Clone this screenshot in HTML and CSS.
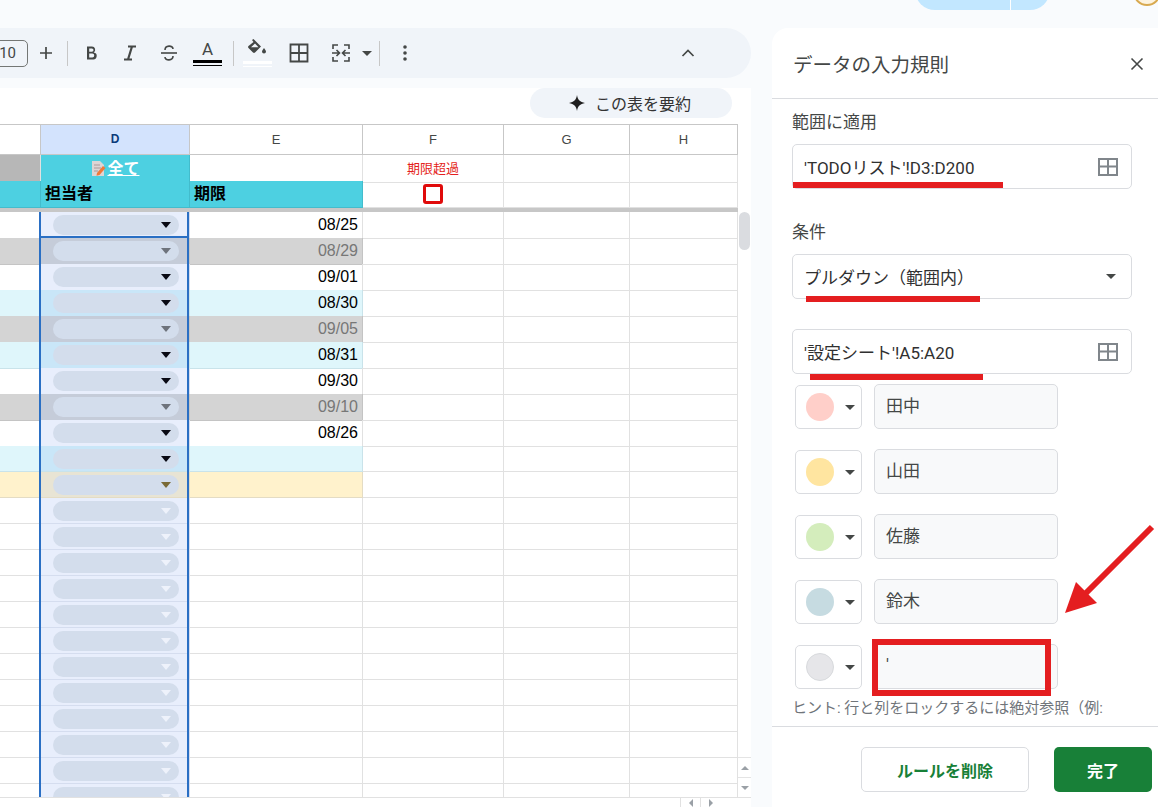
FILE: index.html
```html
<!DOCTYPE html>
<html lang="ja">
<head>
    <meta charset="UTF-8">
    <meta name="viewport" content="width=device-width, initial-scale=1.0">
    <title>データの入力規則</title>
    <link rel="stylesheet" href="styles.css">
</head>
<body>
    <div class="topbar">
        <div class="share-pill"><span class="share-main"></span><span class="share-caret"></span></div>
        <div class="avatar"></div>
    </div>

    <div class="workspace">
        <main class="main">
            <div class="toolbar">
                <div class="font-size">10</div>
                <button class="tb-btn tb-plus"><svg width="16" height="16" viewBox="0 0 16 16"><path d="M8 2v12M2 8h12" stroke="#444746" stroke-width="1.7"/></svg></button>
                <span class="tb-sep"></span>
                <button class="tb-btn tb-bold"><svg width="20" height="20" viewBox="0 0 20 20"><path d="M6 3.5h5a3.2 3.2 0 0 1 1.7 5.9A3.5 3.5 0 0 1 11.500 16.500H6zM8.200 5.500v3.200h2.700a1.600 1.600 0 0 0 0-3.200zM8.200 10.600v3.900h3.100a1.950 1.950 0 0 0 0-3.900z" fill="#444746" fill-rule="evenodd"/></svg></button>
                <button class="tb-btn"><svg width="20" height="20" viewBox="0 0 20 20"><path d="M8 3.500h8M4 16.500h8M12 3.500L8 16.500" stroke="#444746" stroke-width="2.200" fill="none"/></svg></button>
                <button class="tb-btn"><svg width="22" height="22" viewBox="0 0 22 22"><path d="M3 11h16" stroke="#444746" stroke-width="1.600"/><path d="M7 8c0-5 8-5 8-1M15 14c0 5-8 5-8 1" stroke="#444746" stroke-width="1.600" fill="none"/></svg></button>
                <button class="tb-btn tb-color"><span class="tb-letter">A</span><span class="tb-bar tb-bar-black"></span></button>
                <span class="tb-sep tb-sep-two"></span>
                <button class="tb-btn tb-fill"><svg width="24" height="22" viewBox="0 0 24 22"><path d="M7 1l1.500-1L16 7.500 10 13.500a1.500 1.500 0 0 1-2 0L3.500 9a1.500 1.500 0 0 1 0-2L8.500 3z M6 8.200h7.500L10 4.600z" fill="#444746" fill-rule="evenodd"/><path d="M19 9c1.300 1.800 2 2.700 2 3.600a2 2 0 0 1-4 0c0-.9.700-1.800 2-3.600z" fill="#444746"/></svg><span class="tb-bar tb-bar-white"></span></button>
                <button class="tb-btn tb-borders"><svg width="20" height="20" viewBox="0 0 20 20"><path d="M1.500 1.500h17v17h-17zM10 1.500v17M1.500 10h17" stroke="#444746" stroke-width="1.800" fill="none"/></svg></button>
                <button class="tb-btn tb-merge"><svg width="22" height="22" viewBox="0 0 22 22"><path d="M8 3H3v4M3 15v4h5M14 3h5v4M19 15v4h-5" stroke="#444746" stroke-width="1.600" fill="none"/><path d="M2 11h7M6.500 8l3 3-3 3M20 11h-7M15.500 8l-3 3 3 3" stroke="#444746" stroke-width="1.600" fill="none"/></svg></button>
                <span class="caret tb-caret"></span>
                <span class="tb-sep tb-sep-three"></span>
                <button class="tb-btn tb-dots"><svg width="6" height="18" viewBox="0 0 6 18"><circle cx="3" cy="3" r="1.800" fill="#444746"/><circle cx="3" cy="9" r="1.800" fill="#444746"/><circle cx="3" cy="15" r="1.800" fill="#444746"/></svg></button>
                <button class="tb-btn tb-chevron"><svg width="16" height="16" viewBox="0 0 16 16"><path d="M2.500 11L8 5.500l5.500 5.500" stroke="#444746" stroke-width="1.700" fill="none"/></svg></button>
            </div>

            <div class="sheet-area">
                <div class="summary-bar">
                    <div class="summary-pill">
                        <svg width="16" height="16" viewBox="0 0 16 16"><path d="M8 0c.8 4.800 3 7.100 8 8-5 .9-7.200 3.200-8 8-.8-4.800-3-7.100-8-8 5-.9 7.200-3.200 8-8z" fill="#1f1f1f"/></svg>
                        <span>この表を要約</span>
                    </div>
                </div>

                <div class="sheet-wrap">
                    <div class="grid">
                        <div class="row row-head">
                            <div class="cell"></div><div class="cell col-active">D</div><div class="cell">E</div><div class="cell">F</div><div class="cell">G</div><div class="cell">H</div>
                        </div>
                        <div class="row row-filter">
                            <div class="cell c-gray"></div>
                            <div class="cell c-cyan filter-link"><svg width="17" height="17" viewBox="0 0 17 17"><path d="M2 1h8l4 4v11H2z" fill="#ddd5d5"/><path d="M4 5h6M4 8h7M4 11h4" stroke="#a99" stroke-width="1"/><path d="M7 13l6-7 2.500 2-6 7-3 .8z" fill="#f0793a"/></svg><span>全て</span></div>
                            <div class="cell"></div>
                            <div class="cell overdue">期限超過</div>
                            <div class="cell"></div><div class="cell"></div>
                        </div>
                        <div class="row row-title">
                            <div class="cell c-cyan"></div>
                            <div class="cell c-cyan title">担当者</div>
                            <div class="cell c-cyan title">期限</div>
                            <div class="cell check-cell"><span class="checkbox"></span></div>
                            <div class="cell"></div><div class="cell"></div>
                        </div>
                        <div class="freeze"></div>

                        <div class="row"><div class="cell"></div><div class="cell d"><span class="chip"><i class="arrow"></i></span></div><div class="cell date">08/25</div><div class="cell"></div><div class="cell"></div><div class="cell"></div></div>
                        <div class="row done"><div class="cell"></div><div class="cell d"><span class="chip"><i class="arrow"></i></span></div><div class="cell date">08/29</div><div class="cell plain"></div><div class="cell plain"></div><div class="cell plain"></div></div>
                        <div class="row"><div class="cell"></div><div class="cell d"><span class="chip"><i class="arrow"></i></span></div><div class="cell date">09/01</div><div class="cell"></div><div class="cell"></div><div class="cell"></div></div>
                        <div class="row near"><div class="cell"></div><div class="cell d"><span class="chip"><i class="arrow"></i></span></div><div class="cell date">08/30</div><div class="cell plain"></div><div class="cell plain"></div><div class="cell plain"></div></div>
                        <div class="row done"><div class="cell"></div><div class="cell d"><span class="chip"><i class="arrow"></i></span></div><div class="cell date">09/05</div><div class="cell plain"></div><div class="cell plain"></div><div class="cell plain"></div></div>
                        <div class="row near"><div class="cell"></div><div class="cell d"><span class="chip"><i class="arrow"></i></span></div><div class="cell date">08/31</div><div class="cell plain"></div><div class="cell plain"></div><div class="cell plain"></div></div>
                        <div class="row"><div class="cell"></div><div class="cell d"><span class="chip"><i class="arrow"></i></span></div><div class="cell date">09/30</div><div class="cell"></div><div class="cell"></div><div class="cell"></div></div>
                        <div class="row done"><div class="cell"></div><div class="cell d"><span class="chip"><i class="arrow"></i></span></div><div class="cell date">09/10</div><div class="cell plain"></div><div class="cell plain"></div><div class="cell plain"></div></div>
                        <div class="row"><div class="cell"></div><div class="cell d"><span class="chip"><i class="arrow"></i></span></div><div class="cell date">08/26</div><div class="cell"></div><div class="cell"></div><div class="cell"></div></div>
                        <div class="row near"><div class="cell"></div><div class="cell d"><span class="chip"><i class="arrow"></i></span></div><div class="cell"></div><div class="cell plain"></div><div class="cell plain"></div><div class="cell plain"></div></div>
                        <div class="row warn"><div class="cell"></div><div class="cell d"><span class="chip"><i class="arrow"></i></span></div><div class="cell"></div><div class="cell plain"></div><div class="cell plain"></div><div class="cell plain"></div></div>
                        <div class="row empty"><div class="cell"></div><div class="cell d"><span class="chip"><i class="arrow"></i></span></div><div class="cell"></div><div class="cell"></div><div class="cell"></div><div class="cell"></div></div>
                        <div class="row empty"><div class="cell"></div><div class="cell d"><span class="chip"><i class="arrow"></i></span></div><div class="cell"></div><div class="cell"></div><div class="cell"></div><div class="cell"></div></div>
                        <div class="row empty"><div class="cell"></div><div class="cell d"><span class="chip"><i class="arrow"></i></span></div><div class="cell"></div><div class="cell"></div><div class="cell"></div><div class="cell"></div></div>
                        <div class="row empty"><div class="cell"></div><div class="cell d"><span class="chip"><i class="arrow"></i></span></div><div class="cell"></div><div class="cell"></div><div class="cell"></div><div class="cell"></div></div>
                        <div class="row empty"><div class="cell"></div><div class="cell d"><span class="chip"><i class="arrow"></i></span></div><div class="cell"></div><div class="cell"></div><div class="cell"></div><div class="cell"></div></div>
                        <div class="row empty"><div class="cell"></div><div class="cell d"><span class="chip"><i class="arrow"></i></span></div><div class="cell"></div><div class="cell"></div><div class="cell"></div><div class="cell"></div></div>
                        <div class="row empty"><div class="cell"></div><div class="cell d"><span class="chip"><i class="arrow"></i></span></div><div class="cell"></div><div class="cell"></div><div class="cell"></div><div class="cell"></div></div>
                        <div class="row empty"><div class="cell"></div><div class="cell d"><span class="chip"><i class="arrow"></i></span></div><div class="cell"></div><div class="cell"></div><div class="cell"></div><div class="cell"></div></div>
                        <div class="row empty"><div class="cell"></div><div class="cell d"><span class="chip"><i class="arrow"></i></span></div><div class="cell"></div><div class="cell"></div><div class="cell"></div><div class="cell"></div></div>
                        <div class="row empty"><div class="cell"></div><div class="cell d"><span class="chip"><i class="arrow"></i></span></div><div class="cell"></div><div class="cell"></div><div class="cell"></div><div class="cell"></div></div>
                        <div class="row empty"><div class="cell"></div><div class="cell d"><span class="chip"><i class="arrow"></i></span></div><div class="cell"></div><div class="cell"></div><div class="cell"></div><div class="cell"></div></div>
                        <div class="row empty row-cut"><div class="cell"></div><div class="cell d"><span class="chip"><i class="arrow"></i></span></div><div class="cell"></div><div class="cell"></div><div class="cell"></div><div class="cell"></div></div>

                        <div class="selection"></div>
                        <div class="selection-first"></div>
                    </div>

                    <div class="vscroll">
                        <div class="vscroll-top"></div>
                        <div class="vthumb"></div>
                        <div class="vbtns">
                            <div class="vbtn"><i class="tri-up"></i></div>
                            <div class="vbtn"><i class="tri-down"></i></div>
                        </div>
                    </div>
                </div>
                <div class="hscroll">
                    <div class="hbtn"><i class="tri-left"></i></div>
                    <div class="hbtn"><i class="tri-right"></i></div>
                </div>
            </div>
        </main>

        <aside class="panel">
            <div class="panel-head">
                <h2>データの入力規則</h2>
                <svg width="14" height="14" viewBox="0 0 14 14"><path d="M1.500 1.500l11 11M12.500 1.500l-11 11" stroke="#444746" stroke-width="1.600"/></svg>
            </div>
            <div class="panel-body">
                <div class="label">範囲に適用</div>
                <div class="field">
                    <span>'TODOリスト'!D3:D200</span>
                    <svg class="grid-icon" width="20" height="18" viewBox="0 0 20 18"><path d="M1 1h18v16H1zM10 1v16M1 8.500h18" stroke="#80868b" stroke-width="2" fill="none"/></svg>
                </div>
                <div class="label label-cond">条件</div>
                <div class="field">
                    <span>プルダウン（範囲内）</span>
                    <span class="caret caret-select"></span>
                </div>
                <div class="field field-range">
                    <span>'設定シート'!A5:A20</span>
                    <svg class="grid-icon" width="20" height="18" viewBox="0 0 20 18"><path d="M1 1h18v16H1zM10 1v16M1 8.500h18" stroke="#80868b" stroke-width="2" fill="none"/></svg>
                </div>

                <div class="option">
                    <div class="swatch-box"><span class="swatch sw-red"></span><span class="caret"></span></div>
                    <div class="option-input">田中</div>
                </div>
                <div class="option">
                    <div class="swatch-box"><span class="swatch sw-yellow"></span><span class="caret"></span></div>
                    <div class="option-input">山田</div>
                </div>
                <div class="option">
                    <div class="swatch-box"><span class="swatch sw-green"></span><span class="caret"></span></div>
                    <div class="option-input">佐藤</div>
                </div>
                <div class="option">
                    <div class="swatch-box"><span class="swatch sw-blue"></span><span class="caret"></span></div>
                    <div class="option-input">鈴木</div>
                </div>
                <div class="option">
                    <div class="swatch-box"><span class="swatch sw-gray"></span><span class="caret"></span></div>
                    <div class="option-input option-quote">'</div>
                </div>
                <div class="hint">ヒント: 行と列をロックするには絶対参照（例:</div>
            </div>
            <div class="panel-foot">
                <button class="btn-delete">ルールを削除</button>
                <button class="btn-done">完了</button>
            </div>
        </aside>
    </div>

    <!-- 赤い注釈 -->
    <svg class="annotations" width="1158" height="807" viewBox="0 0 1158 807">
        <rect x="793" y="182" width="210" height="6" fill="#e41e20"/>
        <rect x="806" y="296" width="174" height="6" fill="#e41e20"/>
        <rect x="810" y="374" width="173" height="6" fill="#e41e20"/>
        <rect x="875" y="642" width="173" height="51" fill="none" stroke="#e41e20" stroke-width="6"/>
        <path d="M1152 527L1085 594" stroke="#e41e20" stroke-width="6"/>
        <polygon points="1065,613 1097,603 1076,582" fill="#e41e20"/>
    </svg>
</body>
</html>
```

FILE: styles.css
```css
* {
    box-sizing: border-box;
}
html, body {
    margin: 0;
    height: 100%;
}
body {
    width: 1158px;
    height: 807px;
    overflow: hidden;
    position: relative;
    background: #f9fbfd;
    font-family: "Liberation Sans", "Noto Sans CJK JP", sans-serif;
    color: #1f1f1f;
}
button {
    font-family: inherit;
    background: none;
    border: none;
    padding: 0;
}

/* top bar */
.topbar {
    height: 28px;
    position: relative;
}
.share-pill {
    position: absolute;
    left: 915px;
    top: -20px;
    width: 135px;
    height: 30px;
    display: flex;
    background: #c2e7ff;
    border-radius: 0 0 20px 20px;
}
.share-main {
    width: 96px;
    border-right: 1px solid #fff;
}
.avatar {
    position: absolute;
    left: 1133px;
    top: -22px;
    width: 28px;
    height: 28px;
    border-radius: 50%;
    background: #fdf3df;
    border: 2px solid #d8a94f;
}

.workspace {
    display: flex;
    height: 779px;
}
.main {
    width: 772px;
    flex: none;
}

/* toolbar */
.toolbar {
    width: 781px;
    margin-left: -30px;
    height: 50px;
    background: #f0f4f9;
    border-radius: 25px;
    display: flex;
    align-items: center;
    position: relative;
}
.font-size {
    width: 58px;
    height: 27px;
    margin-top: 1px;
    border: 1px solid #747775;
    border-radius: 5px;
    text-align: right;
    padding-right: 11px;
    font-family: Roboto, sans-serif;
    font-size: 15px;
    line-height: 25px;
    color: #444746;
}
.tb-btn {
    width: 39px;
    height: 30px;
    display: flex;
    flex-direction: column;
    align-items: center;
    justify-content: center;
    flex: none;
}
.tb-plus {
    width: 36px;
}
.tb-sep {
    width: 1px;
    height: 25px;
    background: #c7c7c7;
    margin: 0 4px 0 3px;
}
.tb-bold {
    margin-left: -1px;
}
.tb-sep {
    flex: none;
}
.tb-sep-two {
    margin: 0 4px 0 6px;
}
.tb-letter {
    font-family: Roboto, sans-serif;
    font-size: 17px;
    line-height: 18px;
    color: #444746;
}
.tb-bar {
    width: 29px;
    height: 6px;
    margin-top: 2px;
    border-top: 3px solid;
    border-bottom: 1px solid;
}
.tb-bar-black {
    border-color: #000;
}
.tb-bar-white {
    border-color: #fff;
    margin-top: 0;
}
.tb-fill {
    width: 38px;
    margin-left: 0;
}
.tb-borders {
    width: 46px;
}
.tb-merge {
    width: 38px;
}
.tb-caret {
    margin-left: 2px;
}
.tb-sep-three {
    margin: 0 0 0 7px;
}
.tb-dots {
    margin-left: 5px;
}
.tb-chevron {
    position: absolute;
    right: 44px;
    top: 10px;
}
.caret {
    display: inline-block;
    width: 0;
    height: 0;
    border-left: 5px solid transparent;
    border-right: 5px solid transparent;
    border-top: 5px solid #444746;
    flex: none;
}

/* sheet */
.sheet-area {
    margin-top: 10px;
    width: 751px;
    height: 719px;
    background: #fff;
}
.summary-bar {
    height: 36px;
    padding-right: 19px;
    display: flex;
    justify-content: flex-end;
}
.summary-pill {
    width: 202px;
    height: 30px;
    background: #f0f4f9;
    border-radius: 15px;
    display: flex;
    align-items: center;
    gap: 10px;
    padding-left: 39px;
    font-size: 16px;
    color: #333;
    font-family: "Noto Sans CJK JP", sans-serif;
}
.sheet-wrap {
    display: flex;
    height: 673px;
}
.grid {
    width: 738px;
    flex: none;
    position: relative;
    overflow: hidden;
    border-top: 1px solid #c7c7c7;
}
.row {
    display: grid;
    grid-template-columns: 41px 149px 173px 141px 126px 108px;
    height: 26px;
}
.cell {
    border-right: 1px solid #e1e1e1;
    border-bottom: 1px solid #e1e1e1;
    min-width: 0;
}
.row-head {
    height: 30px;
}
.row-head .cell {
    border-color: #c7c7c7;
    font-size: 13px;
    text-align: center;
    line-height: 29px;
    color: #444746;
}
.row-head .col-active {
    background: #d3e3fd;
    color: #0b3a7a;
    font-weight: bold;
    font-size: 12px;
}
.c-gray {
    background: #b7b7b7;
}
.c-cyan {
    background: #4dd0e1;
    border-color: #43bccc;
}
.filter-link {
    display: flex;
    align-items: center;
    justify-content: center;
    color: #fff;
    font-weight: bold;
    font-size: 16px;
    text-decoration: underline;
}
.filter-link span {
    line-height: 25px;
}
.overdue {
    color: #e41e20;
    font-size: 13px;
    text-align: center;
    line-height: 27px;
}
.title {
    color: #000;
    font-weight: bold;
    font-size: 16px;
    line-height: 26px;
    padding-left: 4px;
}
.check-cell {
    display: flex;
    align-items: center;
    justify-content: center;
}
.checkbox {
    width: 20px;
    height: 20px;
    border: 3px solid #e00b0b;
    border-radius: 3px;
    background: #fff;
}
.freeze {
    height: 5px;
    background: #c7c7c7;
}
.date {
    text-align: right;
    font-size: 16px;
    line-height: 26px;
    padding-right: 4px;
    color: #000;
}
.d {
    background: #e8eefc;
    padding-top: 3px;
    padding-left: 12px;
    border-right-color: #d5ddef;
    border-bottom-color: #d5ddef;
}
.chip {
    display: block;
    width: 126px;
    height: 20px;
    background: #d3ddec;
    border-radius: 10px;
    position: relative;
}
.arrow {
    position: absolute;
    right: 8px;
    top: 7px;
    width: 0;
    height: 0;
    border-left: 5px solid transparent;
    border-right: 5px solid transparent;
    border-top: 6px solid #0a0a14;
}

.done .cell:not(.plain) {
    background: #d4d4d4;
    border-color: #c4c4c4;
}
.done .date {
    color: #777;
}
.done .d {
    background: #c5ccd9 !important;
}
.done .arrow {
    border-top-color: #6e737c;
}
.near .cell:not(.plain) {
    background: #dff6fb;
    border-color: #c9e3ea;
}
.near .d {
    background: #c9e6f8 !important;
}
.warn .cell:not(.plain) {
    background: #fff2cc;
    border-color: #e4dcc4;
}
.warn .d {
    background: #e8e4d4 !important;
}
.warn .arrow {
    border-top-color: #7a6a36;
}
.empty .arrow {
    border-top-color: #eef2fb;
}
.row-cut {
    height: 26px;
}

/* selected column */
.selection {
    position: absolute;
    left: 39px;
    top: 87px;
    width: 150px;
    bottom: 0;
    border-left: 2px solid #2a6fc4;
    border-right: 2px solid #2a6fc4;
}
.selection-first {
    position: absolute;
    left: 39px;
    top: 111px;
    width: 150px;
    height: 2px;
    background: #2a6fc4;
}

.vscroll {
    flex: 1;
    display: flex;
    flex-direction: column;
}
.vscroll-top {
    height: 87px;
    flex: none;
}
.vthumb {
    height: 38px;
    margin: 1px 1px 0 1px;
    background: #dadce0;
    border-radius: 6px;
    flex: none;
}
.vbtns {
    margin-top: auto;
}
.vbtn {
    height: 20px;
    border-top: 1px solid #e4e4e4;
    display: flex;
    align-items: center;
    justify-content: center;
}
.tri-up, .tri-down, .tri-left, .tri-right {
    width: 0;
    height: 0;
    border: 4px solid transparent;
}
.tri-up {
    border-bottom: 4px solid #9aa0a6;
    border-top: 0;
}
.tri-down {
    border-top: 4px solid #9aa0a6;
    border-bottom: 0;
}
.tri-left {
    border-right: 4px solid #9aa0a6;
    border-left: 0;
}
.tri-right {
    border-left: 4px solid #9aa0a6;
    border-right: 0;
}
.hscroll {
    height: 10px;
    border-top: 1px solid #e1e1e1;
    display: flex;
    justify-content: flex-end;
    padding-right: 31px;
}
.hbtn {
    width: 20px;
    border-left: 1px solid #e1e1e1;
    display: flex;
    align-items: center;
    justify-content: center;
}

/* side panel */
.panel {
    width: 386px;
    flex: none;
    height: 779px;
    background: #fff;
    border-radius: 16px 0 0 0;
    display: flex;
    flex-direction: column;
    font-family: Roboto, "Noto Sans CJK JP", sans-serif;
    color: #444746;
}
.panel-head {
    height: 71px;
    flex: none;
    border-bottom: 1px solid #dadce0;
    display: flex;
    align-items: center;
    justify-content: space-between;
    padding: 0 14px 0 21px;
}
.panel-head h2 {
    margin: 0;
    font-size: 19.5px;
    font-weight: 400;
    color: #444746;
}
.panel-head svg {
    margin-top: 2px;
}
.panel-body {
    flex: 1;
    min-height: 0;
    overflow: hidden;
    padding: 10px 26px 0 20px;
}
.label {
    font-size: 17px;
    line-height: 26px;
    color: #444746;
}
.label-cond {
    margin-top: 30px;
}
.field {
    height: 45px;
    margin-top: 9px;
    border: 1px solid #dadce0;
    border-radius: 5px;
    display: flex;
    align-items: center;
    justify-content: space-between;
    padding: 0 13px 0 11px;
    font-size: 17px;
    color: #303030;
}
.field-range {
    margin-top: 30px;
}
.caret-select {
    margin-right: 2px;
}
.grid-icon {
    flex: none;
}
.option {
    display: flex;
    gap: 12px;
    padding-left: 3px;
    height: 45px;
    margin-top: 20px;
}
.field-range + .option {
    margin-top: 10px;
}
.swatch-box {
    width: 67px;
    height: 44px;
    margin-top: 1px;
    border: 1px solid #dadce0;
    border-radius: 5px;
    display: flex;
    align-items: center;
    gap: 11px;
    padding-left: 10px;
    flex: none;
}
.swatch {
    width: 28px;
    height: 28px;
    border-radius: 50%;
    flex: none;
}
.sw-red {
    background: #ffcfc9;
}
.sw-yellow {
    background: #ffe5a0;
}
.sw-green {
    background: #d4edbc;
}
.sw-blue {
    background: #c6dbe1;
}
.sw-gray {
    background: #e6e6e9;
    border: 1px solid #d8dadd;
}
.option-input {
    width: 184px;
    height: 45px;
    background: #f8f9fa;
    border: 1px solid #dadce0;
    border-radius: 5px;
    padding-left: 11px;
    font-size: 17px;
    line-height: 43px;
    color: #444746;
}
.option-quote {
    line-height: 38px;
}
.hint {
    margin-top: 6px;
    font-size: 15px;
    line-height: 26px;
    color: #70757a;
    white-space: nowrap;
}
.panel-foot {
    height: 81px;
    flex: none;
    border-top: 1px solid #dadce0;
    display: flex;
    justify-content: flex-end;
    gap: 25px;
    padding: 20px 6px 0 0;
}
.panel-foot button {
    height: 45px;
    border-radius: 5px;
    font-size: 16px;
    font-weight: bold;
    font-family: "Noto Sans CJK JP", sans-serif;
}
.btn-delete {
    width: 168px;
    border: 1px solid #dadce0;
    background: #fff;
    color: #188038;
}
.btn-done {
    width: 98px;
    background: #188038;
    color: #fff;
}

/* annotations */
.annotations {
    position: absolute;
    left: 0;
    top: 0;
    pointer-events: none;
}
```
